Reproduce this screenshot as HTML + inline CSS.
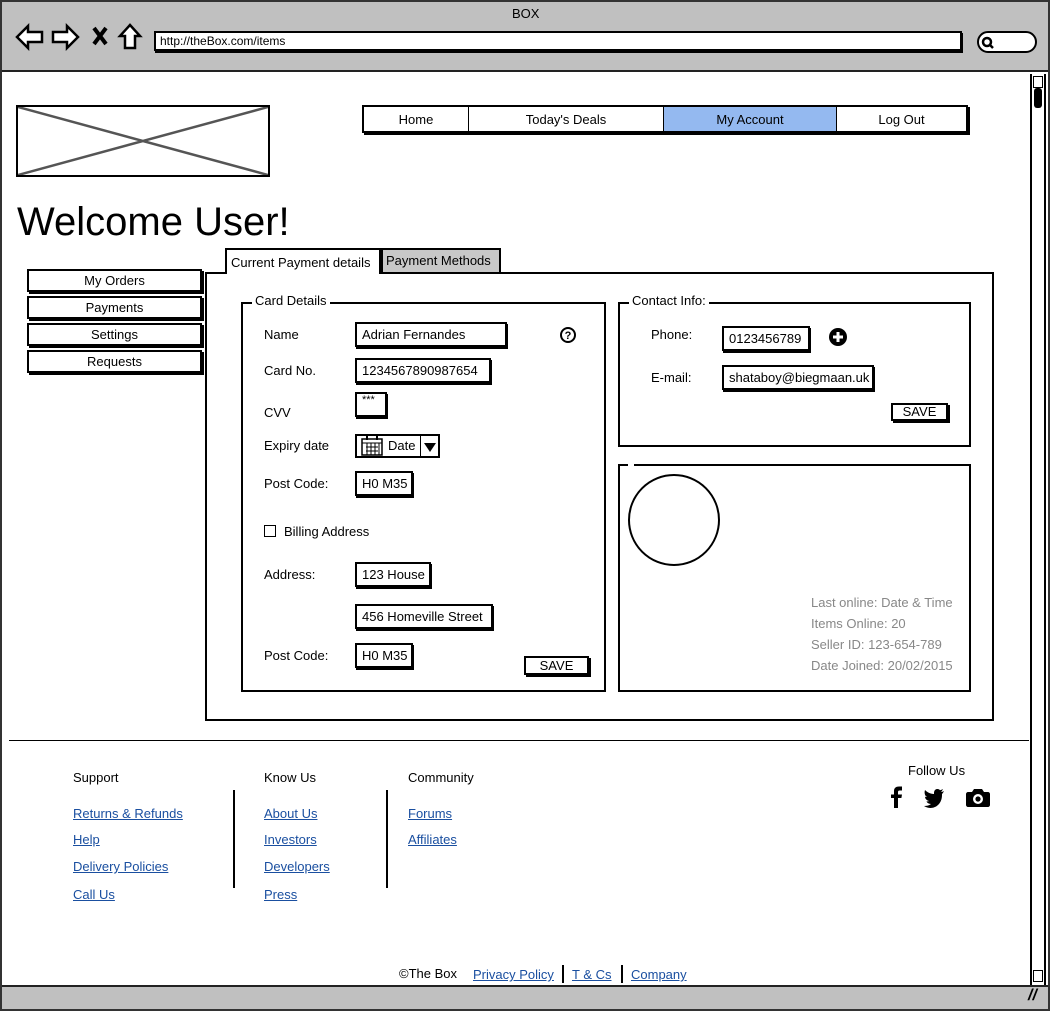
<!DOCTYPE html>
<html><head><meta charset="utf-8"><style>
*{margin:0;padding:0;box-sizing:border-box}
body{width:1050px;height:1011px;position:relative;background:#fff;font-family:"Liberation Sans",sans-serif;font-size:13px;color:#000;overflow:hidden}
.a{position:absolute}
.b{position:absolute;border:2px solid #000;background:#fff}
.s{box-shadow:2px 2px 0 #000}
.t{position:absolute;white-space:nowrap}
.in{position:absolute;border:2px solid #000;background:#fff;box-shadow:1px 2px 0 #000;padding:3px 5px 0;font-size:13px;white-space:nowrap}
a,.l{color:#1a4fa0;text-decoration:underline}
.g{color:#888}
</style></head><body>
<div class="a" style="left:0;top:0;width:1050px;height:1011px;border:2px solid #333"></div>
<div class="a" style="left:2px;top:2px;width:1046px;height:70px;background:#c0c0c0;border-bottom:2px solid #222"></div>
<div class="t" style="left:512px;top:6px;font-size:13px">BOX</div>
<svg class="a" style="left:14px;top:22px" width="130" height="30" viewBox="0 0 130 30" fill="none" stroke="#000" stroke-width="2.5">
<path d="M3 15 L14 4 L14 10 L28 10 L28 20 L14 20 L14 26 Z" fill="#fff"/>
<path d="M64 15 L53 4 L53 10 L39 10 L39 20 L53 20 L53 26 Z" fill="#fff"/>
<path d="M80 6 L92 22 M92 6 L80 22" stroke-width="4"/>
<path d="M116 3 L106 14 L111 14 L111 26 L121 26 L121 14 L126 14 Z" fill="#fff"/>
</svg>
<div class="b" style="left:154px;top:31px;width:808px;height:20px;box-shadow:1px 2px 0 #000"><span class="t" style="left:4px;top:1px;font-size:12px">http://theBox.com/items</span></div>
<div class="b" style="left:977px;top:31px;width:60px;height:22px;border-radius:11px"></div>
<svg class="a" style="left:981px;top:36px" width="14" height="14"><circle cx="6" cy="6" r="4" fill="none" stroke="#000" stroke-width="2.5"/><path d="M9 9 L12 12" stroke="#000" stroke-width="2.5"/></svg>
<div class="a" style="left:2px;top:985px;width:1046px;height:24px;background:#c0c0c0;border-top:2px solid #222"></div>
<div class="t" style="left:1028px;top:987px;font-size:16px;font-weight:bold;font-style:italic">//</div>
<div class="a" style="left:1030px;top:74px;width:16px;height:911px;border-left:2px solid #000;border-right:2px solid #000;background:#fff"></div>
<div class="a" style="left:1033px;top:76px;width:10px;height:12px;border:1px solid #000"></div>
<div class="a" style="left:1034px;top:88px;width:8px;height:20px;background:#000;border-radius:3px"></div>
<div class="a" style="left:1033px;top:970px;width:10px;height:12px;border:1px solid #000"></div>

<div class="b" style="left:16px;top:105px;width:254px;height:72px"></div>
<svg class="a" style="left:18px;top:107px" width="250" height="68"><path d="M0 0 L250 68 M250 0 L0 68" stroke="#555" stroke-width="2.5"/></svg>

<div class="b s" style="left:362px;top:105px;width:606px;height:28px;display:flex">
<div style="width:105px;text-align:center;line-height:25px;border-right:1px solid #000">Home</div>
<div style="width:195px;text-align:center;line-height:25px;border-right:1px solid #000">Today's Deals</div>
<div style="width:173px;text-align:center;line-height:25px;background:#94b9f0;border-right:1px solid #000">My Account</div>
<div style="flex:1;text-align:center;line-height:25px">Log Out</div>
</div>

<div class="t" style="left:17px;top:200px;font-size:40px">Welcome User!</div>

<div class="b s" style="left:27px;top:269px;width:175px;height:23px;text-align:center;line-height:19px">My Orders</div>
<div class="b s" style="left:27px;top:296px;width:175px;height:23px;text-align:center;line-height:19px">Payments</div>
<div class="b s" style="left:27px;top:323px;width:175px;height:23px;text-align:center;line-height:19px">Settings</div>
<div class="b s" style="left:27px;top:350px;width:175px;height:23px;text-align:center;line-height:19px">Requests</div>

<div class="b" style="left:205px;top:272px;width:789px;height:449px"></div>
<div class="a" style="left:225px;top:248px;width:156px;height:26px;border:2px solid #000;border-bottom:none;background:#fff"><span class="t" style="left:4px;top:5px">Current Payment details</span></div>
<div class="a" style="left:381px;top:248px;width:120px;height:24px;border:2px solid #000;border-bottom:none;background:#c8c8c8"><span class="t" style="left:3px;top:3px">Payment Methods</span></div>

<div class="b" style="left:241px;top:302px;width:365px;height:390px"></div>
<div class="t" style="left:252px;top:293px;background:#fff;padding:0 3px">Card Details</div>
<div class="t" style="left:264px;top:327px">Name</div>
<div class="in" style="left:355px;top:322px;width:152px;height:25px">Adrian Fernandes</div>
<svg class="a" style="left:559px;top:326px" width="18" height="18"><circle cx="9" cy="9" r="7" fill="none" stroke="#000" stroke-width="2"/><text x="9" y="13" font-size="11" font-weight="bold" text-anchor="middle" font-family="Liberation Sans">?</text></svg>
<div class="t" style="left:264px;top:363px">Card No.</div>
<div class="in" style="left:355px;top:358px;width:136px;height:25px">1234567890987654</div>
<div class="t" style="left:264px;top:405px">CVV</div>
<div class="in" style="left:355px;top:392px;width:32px;height:25px;font-size:11px;padding-top:0">***</div>
<div class="t" style="left:264px;top:438px">Expiry date</div>
<div class="b" style="left:355px;top:434px;width:85px;height:24px"></div>
<svg class="a" style="left:361px;top:436px" width="24" height="20"><rect x="1" y="3" width="20" height="16" fill="none" stroke="#000" stroke-width="1.5"/><path d="M1 7H21M5 11H17M5 15H17M6 7V19M10 7V19M14 7V19M18 7V19" stroke="#000" stroke-width="1"/><path d="M6 0V4M16 0V4" stroke="#000" stroke-width="2"/></svg>
<div class="t" style="left:388px;top:438px">Date</div>
<div class="a" style="left:420px;top:436px;width:1px;height:20px;background:#000"></div>
<svg class="a" style="left:423px;top:441px" width="14" height="12"><path d="M1 2H13L7 11Z" fill="#000"/></svg>
<div class="t" style="left:264px;top:476px">Post Code:</div>
<div class="in" style="left:355px;top:471px;width:58px;height:25px">H0 M35</div>
<div class="a" style="left:264px;top:525px;width:12px;height:12px;border:1px solid #000"></div>
<div class="t" style="left:284px;top:524px">Billing Address</div>
<div class="t" style="left:264px;top:567px">Address:</div>
<div class="in" style="left:355px;top:562px;width:76px;height:25px">123 House</div>
<div class="in" style="left:355px;top:604px;width:138px;height:25px">456 Homeville Street</div>
<div class="t" style="left:264px;top:648px">Post Code:</div>
<div class="in" style="left:355px;top:643px;width:58px;height:25px">H0 M35</div>
<div class="b s" style="left:524px;top:656px;width:65px;height:19px;text-align:center;line-height:15px">SAVE</div>

<div class="b" style="left:618px;top:302px;width:353px;height:145px"></div>
<div class="t" style="left:629px;top:293px;background:#fff;padding:0 3px">Contact Info:</div>
<div class="t" style="left:651px;top:327px">Phone:</div>
<div class="in" style="left:722px;top:326px;width:88px;height:25px">0123456789</div>
<svg class="a" style="left:828px;top:327px" width="20" height="20"><circle cx="10" cy="10" r="9" fill="#000"/><path d="M10 5V15M5 10H15" stroke="#fff" stroke-width="3"/></svg>
<div class="t" style="left:651px;top:370px">E-mail:</div>
<div class="in" style="left:722px;top:365px;width:152px;height:25px">shataboy@biegmaan.uk</div>
<div class="b s" style="left:891px;top:403px;width:57px;height:18px;text-align:center;line-height:14px">SAVE</div>

<div class="b" style="left:618px;top:464px;width:353px;height:228px"></div>
<div class="a" style="left:628px;top:462px;width:6px;height:4px;background:#fff"></div>
<div class="a" style="left:628px;top:474px;width:92px;height:92px;border:2px solid #000;border-radius:50%"></div>
<div class="t g" style="left:811px;top:595px">Last online: Date &amp; Time</div>
<div class="t g" style="left:811px;top:616px">Items Online: 20</div>
<div class="t g" style="left:811px;top:637px">Seller ID: 123-654-789</div>
<div class="t g" style="left:811px;top:658px">Date Joined: 20/02/2015</div>

<div class="a" style="left:9px;top:740px;width:1020px;height:1px;background:#000"></div>
<div class="t" style="left:73px;top:770px">Support</div>
<div class="t l" style="left:73px;top:806px">Returns &amp; Refunds</div>
<div class="t l" style="left:73px;top:832px">Help</div>
<div class="t l" style="left:73px;top:859px">Delivery Policies</div>
<div class="t l" style="left:73px;top:887px">Call Us</div>
<div class="a" style="left:233px;top:790px;width:2px;height:98px;background:#000"></div>
<div class="t" style="left:264px;top:770px">Know Us</div>
<div class="t l" style="left:264px;top:806px">About Us</div>
<div class="t l" style="left:264px;top:832px">Investors</div>
<div class="t l" style="left:264px;top:859px">Developers</div>
<div class="t l" style="left:264px;top:887px">Press</div>
<div class="a" style="left:386px;top:790px;width:2px;height:98px;background:#000"></div>
<div class="t" style="left:408px;top:770px">Community</div>
<div class="t l" style="left:408px;top:806px">Forums</div>
<div class="t l" style="left:408px;top:832px">Affiliates</div>
<div class="t" style="left:908px;top:763px">Follow Us</div>
<svg class="a" style="left:886px;top:785px" width="110" height="24">
<path d="M8 23V13H5V9.5H8V6C8 3 10 1.5 13 1.5H16V5.5H13.5C12.3 5.5 12 6.2 12 7.2V9.5H16L15.4 13H12V23Z" fill="#000"/>
<path d="M58 6C57 6.5 56 7 55 7C56 6 56.5 5 57 4C56 4.6 55 5 54 5.2C52 3 48 4 48 8V9C44 9 41 7 39 5C38 8 39 11 41 12C40 12 39.5 12 39 11.5C39 14 41 15.5 43 16C42 16.5 41 16.5 40.5 16.3C41 18 43 19 45 19C43 20.5 40.5 21 38 21C46 26 56 21 56 10V9C57 8 57.5 7 58 6Z" fill="#000"/>
<path d="M82 7H86L88 4H96L98 7H102C103 7 104 8 104 9V20C104 21 103 22 102 22H82C81 22 80 21 80 20V9C80 8 81 7 82 7Z" fill="#000"/><circle cx="92" cy="14" r="5" fill="#fff"/><circle cx="92" cy="14" r="2.6" fill="#000"/>
</svg>
<div class="t" style="left:399px;top:966px">©The Box</div>
<div class="t l" style="left:473px;top:967px">Privacy Policy</div>
<div class="a" style="left:562px;top:965px;width:2px;height:18px;background:#000"></div>
<div class="t l" style="left:572px;top:967px">T &amp; Cs</div>
<div class="a" style="left:621px;top:965px;width:2px;height:18px;background:#000"></div>
<div class="t l" style="left:631px;top:967px">Company</div>
</body></html>
